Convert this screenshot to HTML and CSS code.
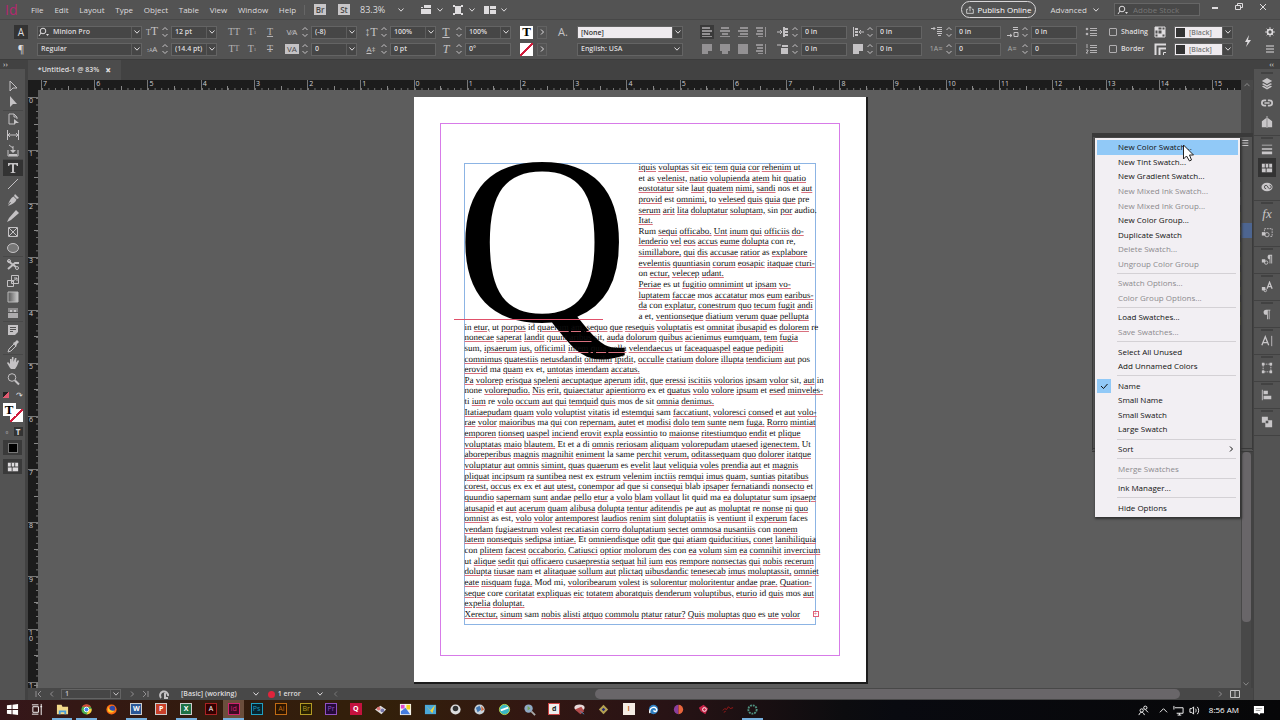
FILE: index.html
```html
<!DOCTYPE html>
<html lang="en">
<head>
    <meta charset="UTF-8">
    <meta name="viewport" content="width=device-width, initial-scale=1.0">
    <title>Untitled-1</title>
    <link rel="stylesheet" href="styles.css">
</head>
<body>
    <svg class="sprite" aria-hidden="true">
        <symbol id="down" viewBox="0 0 8 8"><path d="M1.5 2.5 4 5.2 6.5 2.5" class="ln"/></symbol>
        <symbol id="up" viewBox="0 0 8 8"><path d="M1.5 5.2 4 2.5 6.5 5.2" class="ln"/></symbol>
        <symbol id="right" viewBox="0 0 8 8"><path d="M3 1.5 5.5 4 3 6.5" class="ln"/></symbol>
        <symbol id="left" viewBox="0 0 8 8"><path d="M5 1.5 2.5 4 5 6.5" class="ln"/></symbol>
        <symbol id="spin" viewBox="0 0 8 12"><path d="M1.5 4 4 1.5 6.5 4M1.5 8 4 10.5 6.5 8" class="ln"/></symbol>
        <symbol id="search" viewBox="0 0 12 10"><circle cx="5" cy="4" r="2.8" class="ln"/><path d="M3 6 1 9" class="ln"/><path d="M8 7h3L9.500 9z"/></symbol>
        <symbol id="burger" viewBox="0 0 12 12"><path d="M2 3h8M2 6h8M2 9h8" class="ln"/></symbol>
        <symbol id="al" viewBox="0 0 12 12"><path d="M1 1h8v2H1zM1 4h10v2H1zM1 7h8v2H1zM1 10h10v1H1z"/></symbol>
        <symbol id="ac" viewBox="0 0 12 12"><path d="M2 1h8v2H2zM1 4h10v2H1zM3 7h6v2H3zM1 10h10v1H1z"/></symbol>
        <symbol id="ar" viewBox="0 0 12 12"><path d="M3 1h8v2H3zM1 4h10v2H1zM3 7h8v2H3zM1 10h10v1H1z"/></symbol>
        <symbol id="as" viewBox="0 0 12 12"><path d="M1 1h7v2H1zM2 4h6v2H2zM1 7h7v2H1zM3 10h5v1H3zM10 1h1v10h-1z"/></symbol>
        <symbol id="jl" viewBox="0 0 12 12"><path d="M1 1h10v7H1zM1 8h6v3H1z"/></symbol>
        <symbol id="jc" viewBox="0 0 12 12"><path d="M1 1h10v7H1zM3 8h6v3H3z"/></symbol>
        <symbol id="jf" viewBox="0 0 12 12"><path d="M1 1h10v10H1z"/></symbol>
        <symbol id="ind" viewBox="0 0 12 12"><path d="M0 6h5M3 4l2 2-2 2" class="ln"/><path d="M6 1h2v10H6zM8 2h3v2H8zM8 5h3v2H8zM8 8h3v2H8z"/></symbol>
        <symbol id="ind2" viewBox="0 0 12 12"><path d="M0 2h4" class="ln"/><path d="M5 2h6v2H5zM4 5h7v6H4z"/></symbol>
        <symbol id="indr" viewBox="0 0 12 12"><path d="M7 6h5M9 4 7 6l2 2" class="ln"/><path d="M1 1h1v10H1zM3 2h3v2H3zM3 5h3v2H3zM3 8h3v2H3z"/></symbol>
        <symbol id="space" viewBox="0 0 12 12"><path d="M0 2.500h4M2.500 1 4 2.500 2.500 4M6 1.500h5M6 3.500h5M6 5.500h5M6 7.500h5M7 9.500h3" class="ln"/></symbol>
        <symbol id="spaceb" viewBox="0 0 12 12"><path d="M0 9.500h5M3 8l2 1.500L3 11M6 1.500h5M6 3.500h5M7 6.500h4v4H7z" class="ln"/></symbol>
        <symbol id="bul" viewBox="0 0 12 12"><circle cx="2" cy="3" r="1.300"/><circle cx="2" cy="8" r="1.300"/><path d="M5 2.500h7M5 4.500h7M5 7.500h7M5 9.500h7" class="ln"/></symbol>
        <symbol id="num" viewBox="0 0 12 12"><path d="M2 1v4M1 7h2v1L1 10h2M5 2.500h7M5 4.500h7M5 7.500h7M5 9.500h7" class="ln"/></symbol>
        <symbol id="gridi" viewBox="0 0 12 12"><path d="M1 1h10v10H1zM1 4h10M1 8h10M4 1v10M8 1v10" class="ln"/><path d="M1 1h3v3H1zM8 4h3v4H8zM4 8h4v3H4z"/></symbol>
        <symbol id="corner" viewBox="0 0 12 12"><path d="M1.500 12V1.500H12M5.500 12V5.500H12" class="ln thick"/><path d="M9.500 12V9.500H12" class="ln"/></symbol>
        <symbol id="bolt" viewBox="0 0 12 12"><path d="M7 0 3 7h2.500L4 12l5-7H6z"/></symbol>
        <symbol id="gear" viewBox="0 0 12 12"><circle cx="6" cy="6" r="3" class="ln thick"/><path d="M6 0v3M6 9v3M0 6h3M9 6h3M2 2l2 2M8 8l2 2M10 2 8 4M4 8l-2 2" class="ln"/></symbol>
        <symbol id="view1" viewBox="0 0 12 12"><path d="M1 3h2v1H1zM4 1h7v3H4zM1 5h10v5H1z"/></symbol>
        <symbol id="view2" viewBox="0 0 12 12"><path d="M3 3h6v6H3zM1 1h2v2H1zM9 1h2v2H9zM1 9h2v2H1zM9 9h2v2H9zM3 2h6v1H3zM3 9h6v1H3z"/></symbol>
        <symbol id="view3" viewBox="0 0 12 12"><path d="M0 2h5v8H0zM6 2h6v3H6zM6 6h6v4H6z"/></symbol>
        <symbol id="share" viewBox="0 0 12 12"><path d="M3 5H1v6h10V5H9M6 8V1M3.500 3.500 6 1l2.500 2.500" class="ln"/></symbol>
        <symbol id="t-sel" viewBox="0 0 14 14"><path d="M4 2v10l3-3h4z" class="ln"/></symbol>
        <symbol id="t-dir" viewBox="0 0 14 14"><path d="M4 1v11l3-3h4z"/></symbol>
        <symbol id="t-page" viewBox="0 0 14 14"><path d="M8 12H3V2h5l3 3v2M8 2v3h3" class="ln"/><path d="M8 7v6l2-2h3z"/></symbol>
        <symbol id="t-gap" viewBox="0 0 14 14"><path d="M1.500 2v10M12.500 2v10M2 7h10M4 5 2 7l2 2M10 5l2 2-2 2" class="ln"/></symbol>
        <symbol id="t-col" viewBox="0 0 14 14"><path d="M2 6v6h10V6M3 1l4 3M7 2v5" class="ln"/><path d="M4 6h6L7 9zM3 10h8v2H3z"/></symbol>
        <symbol id="t-type" viewBox="0 0 14 14"><path d="M2 2h10v3h-1L10 3.500H8V11l1.500.5v.5h-5v-.5L6 11V3.500H4L3 5H2z"/></symbol>
        <symbol id="t-line" viewBox="0 0 14 14"><path d="M2 12 12 2" class="ln"/></symbol>
        <symbol id="t-pen" viewBox="0 0 14 14"><path d="M9 1l4 4-2 1-3-3zM7.500 3.500l3 3C10 9 7 11 2 13l3-4-1 0-2 3C3 8 5 4.500 7.500 3.500z"/></symbol>
        <symbol id="t-pencil" viewBox="0 0 14 14"><path d="M10 1l3 3-8 7-4 2 2-4z"/></symbol>
        <symbol id="t-frame" viewBox="0 0 14 14"><path d="M2.500 2.500h9v9h-9zM3 3l8 8M11 3l-8 8" class="ln"/></symbol>
        <symbol id="t-oval" viewBox="0 0 14 14"><ellipse cx="7" cy="7" rx="5.500" ry="4.500" class="ln dim"/></symbol>
        <symbol id="t-cut" viewBox="0 0 14 14"><path d="M2 3l8 6M2 11l7-6h4" class="ln thick"/><circle cx="11" cy="10" r="1.500" class="ln"/><circle cx="3" cy="3" r="1.500" class="ln"/></symbol>
        <symbol id="t-free" viewBox="0 0 14 14"><path d="M5.500 1.500h7v8h-7zM1.500 6.500h6v6h-6zM6 8l5-4M8 4h3v3" class="ln"/></symbol>
        <symbol id="t-grad" viewBox="0 0 14 14"><path d="M2 2h10v10H2z" fill="url(#g1)" stroke="#bbb"/></symbol>
        <symbol id="t-feath" viewBox="0 0 14 14"><path d="M2 2h10v4H2z" opacity=".5"/><path d="M2 7h10v5H2z" opacity=".8"/><path d="M4 4h2v2H4zM8 4h2v2H8z"/></symbol>
        <symbol id="t-note" viewBox="0 0 14 14"><path d="M2 2h10v7l-3 3H2z"/><path d="M4 4.500h6M4 6.500h6M4 8.500h3" stroke="#535353"/></symbol>
        <symbol id="t-eye" viewBox="0 0 14 14"><path d="M8 5 3 10l-1 3 3-1 5-5" class="ln"/><path d="M7 4l2-1 2-2 2 2-2 2-1 3z"/></symbol>
        <symbol id="t-hand" viewBox="0 0 14 14"><path d="M4 12 1 7l1-1 2 2V3h1.500v3L6 1h1.500v5L9 2h1.500L10 6.500 12 4l1 1-2 5-2 3H5z"/></symbol>
        <symbol id="t-zoom" viewBox="0 0 14 14"><circle cx="6" cy="5.500" r="3.800" class="ln"/><path d="M9 8.500l4 4" class="ln thick"/></symbol>
        <symbol id="d-layers" viewBox="0 0 14 14"><path d="M7 0l6 3.500-6 3.500-6-3.500zM1 7l2-1 4 2.500L11 6l2 1-6 3.500zM1 10l2-1 4 2.500L11 9l2 1-6 3.500z"/></symbol>
        <symbol id="d-link" viewBox="0 0 14 14"><path d="M6 4H4a3 3 0 0 0 0 6h2M8 4h2a3 3 0 0 1 0 6H8M4 7h6" class="ln thick"/></symbol>
        <symbol id="d-pages" viewBox="0 0 14 14"><path d="M6.500 2v11H1V6zM7.500 2v11H13V6z"/><path d="M7 0v14" class="ln"/></symbol>
        <symbol id="d-stroke" viewBox="0 0 14 14"><path d="M1 2h12v1H1zM1 6h12v2H1zM1 10h12v3H1z"/></symbol>
        <symbol id="d-swatch" viewBox="0 0 14 14"><path d="M1 2h12v10H1z"/><path d="M5 2v5M9 2v5M1 7h12M6 7v5" stroke="#333"/></symbol>
        <symbol id="d-cc" viewBox="0 0 14 14"><ellipse cx="7" cy="7" rx="6.500" ry="5"/><path d="M6 9a2 2 0 1 1 0-4c2 0 2 4 4 4a2 2 0 0 0 0-4" stroke="#444" fill="none"/></symbol>
        <symbol id="d-obj" viewBox="0 0 14 14"><path d="M4 5V2h9v9h-3" class="ln" stroke-dasharray="2 1"/><circle cx="7" cy="9" r="2.500" class="ln"/><path d="M1 6h4v4H1z"/></symbol>
        <symbol id="d-para" viewBox="0 0 14 14"><path d="M13 1H9a3 3 0 0 0 0 5h1v5h1V2h1v9h1zM1 6h4v4H1z"/><circle cx="6" cy="10" r="2" class="ln"/></symbol>
        <symbol id="d-char" viewBox="0 0 14 14"><path d="M7 9 10 1.500 13 9M8 6.500h4" class="ln wide"/><path d="M1 7h4v4H1z"/><circle cx="5" cy="11" r="1.500" class="ln"/></symbol>
        <symbol id="d-pil" viewBox="0 0 14 14"><path d="M11 2H6a3 3 0 0 0 0 6h1v5h1V3h1v10h1V3h1z"/></symbol>
        <symbol id="d-a" viewBox="0 0 14 14"><path d="M1 12 5 2l4 10M2.500 9h5" class="ln wide"/><path d="M12.500 1v12" class="ln"/></symbol>
        <symbol id="d-tf" viewBox="0 0 14 14"><path d="M2.500 2.500h9v9h-9z" class="ln" stroke-dasharray="2 1"/><path d="M1 1h3v3H1zM10 1h3v3h-3zM1 10h3v3H1zM10 10h3v3h-3z"/></symbol>
        <symbol id="d-align" viewBox="0 0 14 14"><path d="M1 1h1v12H1zM3 2h5v4H3zM3 8h9v4H3z"/></symbol>
        <symbol id="d-path" viewBox="0 0 14 14"><path d="M1 1h7v4h5v8H5V8H1z"/><path d="M5.500 5.500h3v3h-3z" fill="#535353"/></symbol>
        <defs><linearGradient id="g1"><stop stop-color="#555"/><stop offset="1" stop-color="#ccc"/></linearGradient></defs>
    </svg>

    <header class="menubar">
        <span class="logo">Id</span>
        <nav class="menus">
            <button>File</button><button>Edit</button><button>Layout</button><button>Type</button><button>Object</button><button>Table</button><button>View</button><button>Window</button><button>Help</button>
        </nav>
        <button class="chip">Br</button>
        <button class="chip">St</button>
        <button class="zoom">83.3% <svg><use href="#down"/></svg></button>
        <button class="viewbtn" aria-label="View options"><svg class="i12"><use href="#view1"/></svg><svg><use href="#down"/></svg></button>
        <button class="viewbtn" aria-label="Screen mode"><svg class="i12"><use href="#view2"/></svg><svg><use href="#down"/></svg></button>
        <button class="viewbtn" aria-label="Arrange documents"><svg class="i12"><use href="#view3"/></svg><svg><use href="#down"/></svg></button>
        <button class="publish"><svg><use href="#share"/></svg>Publish Online</button>
        <button class="advanced">Advanced <svg><use href="#down"/></svg></button>
        <label class="stock"><svg class="i12"><use href="#search"/></svg><input type="search" placeholder="Adobe Stock" aria-label="Adobe Stock"></label>
        <div class="winbtns">
            <button aria-label="Minimize"><svg class="i10" viewBox="0 0 10 10"><path d="M2 6h6" class="ln thick"/></svg></button>
            <button aria-label="Restore"><svg class="i10" viewBox="0 0 10 10"><path d="M3.500 3V1.500h5v4H7M1.500 3.500h5v4h-5z" class="ln"/></svg></button>
            <button aria-label="Close"><svg class="i10" viewBox="0 0 10 10"><path d="M2 2l6 6M8 2 2 8" class="ln"/></svg></button>
        </div>
    </header>

    <section class="control">
        <button class="mode on">A</button>
        <button class="mode">¶</button>

        <div class="box"><svg class="i12"><use href="#search"/></svg><input value="Minion Pro" aria-label="Font family"><button aria-label="Font list"><svg><use href="#down"/></svg></button></div>
        <div class="box"><input value="Regular" aria-label="Font style"><button aria-label="Style list"><svg><use href="#down"/></svg></button></div>

        <div class="field"><span class="glyph"><small>T</small>T</span><button aria-label="Step"><svg class="spin"><use href="#spin"/></svg></button><div class="box"><input value="12 pt" aria-label="Font size"><button aria-label="Sizes"><svg><use href="#down"/></svg></button></div></div>
        <div class="field"><span class="glyph sans"><small>↕A</small>A</span><button aria-label="Step"><svg class="spin"><use href="#spin"/></svg></button><div class="box"><input value="(14.4 pt)" aria-label="Leading"><button aria-label="Leadings"><svg><use href="#down"/></svg></button></div></div>

        <div class="caps"><button>TT</button><button>T<sup>1</sup></button><button class="ul">T</button></div>
        <div class="caps"><button>T<small>T</small></button><button>T<sub>1</sub></button><button class="st">T</button></div>

        <div class="field"><span class="glyph sans">V⁄A</span><button aria-label="Step"><svg class="spin"><use href="#spin"/></svg></button><div class="box"><input value="(-8)" aria-label="Kerning"><button aria-label="Kernings"><svg><use href="#down"/></svg></button></div></div>
        <div class="field"><span class="glyph sans inv">VA</span><button aria-label="Step"><svg class="spin"><use href="#spin"/></svg></button><div class="box"><input value="0" aria-label="Tracking"><button aria-label="Trackings"><svg><use href="#down"/></svg></button></div></div>

        <div class="field"><span class="glyph">↕T</span><button aria-label="Step"><svg class="spin"><use href="#spin"/></svg></button><div class="box"><input value="100%" aria-label="Vertical scale"><button aria-label="Scales"><svg><use href="#down"/></svg></button></div></div>
        <div class="field"><span class="glyph sans"><u>A</u>‡</span><button aria-label="Step"><svg class="spin"><use href="#spin"/></svg></button><div class="box"><input value="0 pt" aria-label="Baseline shift"></div></div>

        <div class="field"><span class="glyph"><u>T</u></span><button aria-label="Step"><svg class="spin"><use href="#spin"/></svg></button><div class="box"><input value="100%" aria-label="Horizontal scale"><button aria-label="Scales"><svg><use href="#down"/></svg></button></div></div>
        <div class="field"><span class="glyph"><i>T</i></span><button aria-label="Step"><svg class="spin"><use href="#spin"/></svg></button><div class="box"><input value="0°" aria-label="Skew"></div></div>

        <div class="paint"><button class="fill">T</button><button class="more" aria-label="Fill"><svg><use href="#right"/></svg></button></div>
        <div class="paint"><button class="none" aria-label="No stroke"></button><button class="more" aria-label="Stroke"><svg><use href="#right"/></svg></button></div>

        <span class="charstyle">A.</span>
        <span></span>

        <div class="box light"><input value="[None]" aria-label="Character style"><button aria-label="Styles"><svg><use href="#down"/></svg></button></div>
        <div class="box"><input value="English: USA" aria-label="Language"><button class="plain" aria-label="Languages"><svg><use href="#down"/></svg></button></div>

        <div class="aligns"><button class="on" aria-label="Left"><svg class="i12"><use href="#al"/></svg></button><button aria-label="Center"><svg class="i12"><use href="#ac"/></svg></button><button aria-label="Right"><svg class="i12"><use href="#ar"/></svg></button><button aria-label="Towards spine"><svg class="i12"><use href="#as"/></svg></button></div>
        <div class="aligns"><button aria-label="Justify left"><svg class="i12"><use href="#jl"/></svg></button><button aria-label="Justify center"><svg class="i12"><use href="#jc"/></svg></button><button aria-label="Justify all"><svg class="i12"><use href="#jf"/></svg></button><button aria-label="Away from spine"><svg class="i12"><use href="#as"/></svg></button></div>

        <div class="field"><svg class="i12"><use href="#ind"/></svg><button aria-label="Step"><svg class="spin"><use href="#spin"/></svg></button><div class="box"><input value="0 in" aria-label="Left indent"></div></div>
        <div class="field"><svg class="i12"><use href="#ind2"/></svg><button aria-label="Step"><svg class="spin"><use href="#spin"/></svg></button><div class="box"><input value="0 in" aria-label="First line indent"></div></div>
        <div class="field"><svg class="i12"><use href="#indr"/></svg><button aria-label="Step"><svg class="spin"><use href="#spin"/></svg></button><div class="box"><input value="0 in" aria-label="Right indent"></div></div>
        <div class="field"><svg class="i12"><use href="#jl"/></svg><button aria-label="Step"><svg class="spin"><use href="#spin"/></svg></button><div class="box"><input value="0 in" aria-label="Last line indent"></div></div>
        <div class="field"><svg class="i12"><use href="#space"/></svg><button aria-label="Step"><svg class="spin"><use href="#spin"/></svg></button><div class="box"><input value="0 in" aria-label="Space before"></div></div>
        <div class="field"><span class="glyph sans dimmed">1A≡</span><button aria-label="Step"><svg class="spin"><use href="#spin"/></svg></button><div class="box"><input value="0" aria-label="Drop cap lines"></div></div>
        <div class="field"><svg class="i12"><use href="#spaceb"/></svg><button aria-label="Step"><svg class="spin"><use href="#spin"/></svg></button><div class="box"><input value="0 in" aria-label="Space after"></div></div>
        <div class="field"><span class="glyph sans dimmed">A≡</span><button aria-label="Step"><svg class="spin"><use href="#spin"/></svg></button><div class="box"><input value="0" aria-label="Drop cap characters"></div></div>

        <button class="lists" aria-label="Bulleted list"><svg class="i12"><use href="#bul"/></svg></button>
        <button class="lists" aria-label="Numbered list"><svg class="i12"><use href="#num"/></svg></button>

        <label class="check"><input type="checkbox">Shading</label>
        <label class="check"><input type="checkbox">Border</label>

        <svg class="i12"><use href="#gridi"/></svg>
        <svg class="i12"><use href="#corner"/></svg>

        <div class="box light black"><i></i><input value="[Black]" aria-label="Shading color"><button aria-label="Colors"><svg><use href="#down"/></svg></button></div>
        <div class="box light black"><i></i><input value="[Black]" aria-label="Border color"><button aria-label="Colors"><svg><use href="#down"/></svg></button></div>

        <button class="bolt" aria-label="Quick apply"><svg class="i12"><use href="#bolt"/></svg></button>
        <button class="end" aria-label="Settings"><svg class="i10"><use href="#gear"/></svg></button>
        <button class="end" aria-label="Panel menu"><svg class="i12"><use href="#burger"/></svg></button>
    </section>

    <main class="work">
        <aside class="tools">
            <div class="strip">››</div>
            <div class="toolbox" id="toolbox"></div>
            <div class="swaprow"><span class="defaults"></span><span>↷</span></div>
            <div class="fillstroke"><button class="fill big">T</button><button class="none big" aria-label="Stroke"></button></div>
            <div class="applyto"><button aria-label="Container">▫</button><button class="on">T</button></div>
            <button class="apply" aria-label="Apply color"><i></i></button>
            <button class="apply" aria-label="Screen mode"><svg class="i12"><use href="#d-swatch"/></svg></button>
        </aside>

        <section class="doc">
            <div class="tabs"><button class="tab">*Untitled-1 @ 83% <b>×</b></button></div>
            <div class="ruler-row"><div class="hruler" id="hruler"></div><svg class="uparrow"><use href="#up"/></svg></div>
            <div class="stage">
                <div class="vruler" id="vruler"></div>
                <div class="canvas">
                    <div class="page">
                        <div class="margins">
                            <div class="frame">
                                <span class="dropcap">Q</span>
                                <div class="story" id="story"></div>
                                <span class="spell"></span>
                                <span class="overset">+</span>
                            </div>
                        </div>
                    </div>
                </div>
                <div class="vscroll"><i></i><svg><use href="#down"/></svg></div>

                <div class="panel">
                    <div class="panelhead"><svg class="i10"><use href="#burger"/></svg></div>
                    <div class="swatches"><i class="w"></i><i class="w"></i><i></i><i class="sel"></i><i></i><i></i><i></i><i></i><i></i><i></i></div>
                </div>
                <ul class="flyout" role="menu">
                    <li><button class="hot">New Color Swatch...</button></li>
                    <li><button>New Tint Swatch...</button></li>
                    <li><button>New Gradient Swatch...</button></li>
                    <li><button disabled>New Mixed Ink Swatch...</button></li>
                    <li><button disabled>New Mixed Ink Group...</button></li>
                    <li><button>New Color Group...</button></li>
                    <li><button>Duplicate Swatch</button></li>
                    <li><button disabled>Delete Swatch...</button></li>
                    <li><button disabled>Ungroup Color Group</button></li>
                    <li class="sep"></li>
                    <li><button disabled>Swatch Options...</button></li>
                    <li><button disabled>Color Group Options...</button></li>
                    <li class="sep"></li>
                    <li><button>Load Swatches...</button></li>
                    <li><button disabled>Save Swatches...</button></li>
                    <li class="sep"></li>
                    <li><button>Select All Unused</button></li>
                    <li><button>Add Unnamed Colors</button></li>
                    <li class="sep"></li>
                    <li><button class="checked"><svg viewBox="0 0 14 14"><path d="M4 7l2.500 2.500L10.500 5" class="ln"/></svg>Name</button></li>
                    <li><button>Small Name</button></li>
                    <li><button>Small Swatch</button></li>
                    <li><button>Large Swatch</button></li>
                    <li class="sep"></li>
                    <li><button class="sub">Sort <svg><use href="#right"/></svg></button></li>
                    <li class="sep"></li>
                    <li><button disabled>Merge Swatches</button></li>
                    <li class="sep"></li>
                    <li><button>Ink Manager...</button></li>
                    <li class="sep"></li>
                    <li><button>Hide Options</button></li>
                </ul>
                <svg class="cursor" viewBox="0 0 12 18"><path d="M1 1v14l3-3 3 5 2-1-2-5h4z" fill="#fff" stroke="#222"/></svg>
            </div>
            <footer class="status">
                <button aria-label="First page"><svg viewBox="0 0 8 8"><path d="M1 1v6M6 1 3 4l3 3" class="ln"/></svg></button>
                <button aria-label="Previous page"><svg><use href="#left"/></svg></button>
                <div class="box pageno"><input value="1" aria-label="Page"><button aria-label="Pages"><svg><use href="#down"/></svg></button></div>
                <button aria-label="Next page"><svg><use href="#right"/></svg></button>
                <button aria-label="Last page"><svg viewBox="0 0 8 8"><path d="M7 1v6M2 1l3 3-3 3" class="ln"/></svg></button>
                <svg class="pre i12" viewBox="0 0 12 12"><path d="M3 10a4 4 0 1 1 7-2M7 5v5h3" class="ln thick"/></svg>
                <button class="profile">[Basic] (working) <svg><use href="#down"/></svg></button>
                <button class="errors"><i></i>1 error <svg><use href="#down"/></svg></button>
                <button aria-label="Scroll left" class="faint"><svg><use href="#left"/></svg></button>
                <div class="hscroll"><i></i></div>
                <button aria-label="Scroll right"><svg><use href="#right"/></svg></button>
                <svg class="i12 split" viewBox="0 0 12 12"><path d="M1.500 2.500h9v7h-9zM6 2v8" class="ln"/></svg>
            </footer>
        </section>

        <aside class="dock">
            <div class="strip">‹‹</div>
            <div class="dockgroups" id="dock"></div>
        </aside>
    </main>

    <footer class="taskbar">
        <div class="apps">
            <button aria-label="Start"><svg viewBox="0 0 14 14"><path d="M1 2.500 6 2v4.500H1zM7 1.800 13 1v5.500H7zM1 7.500h5V12l-5-.5zM7 7.500h6V13l-6-.8z"/></svg></button>
            <button aria-label="Task view"><svg viewBox="0 0 14 14"><path d="M1 2h7M1 12h7M2 4h6v6H2zM11 1v12M10 4h2" class="ln"/></svg></button>
            <button class="open" aria-label="Explorer"><svg viewBox="0 0 14 14"><path d="M1 2h5l1 2h6v8H1z" fill="#f3d98b"/><path d="M3 8h8v4H9v-2H5v2H3z" fill="#4a9edb"/></svg></button>
            <button class="open" aria-label="Chrome"><svg viewBox="0 0 14 14"><circle cx="7" cy="7" r="5.500" fill="#4caf50"/><path d="M2 4a6 6 0 0 1 10 0z" fill="#db4437"/><path d="M12.500 6a5.500 5.500 0 0 1-5.500 6.500L9.500 7z" fill="#ffcd40"/><circle cx="7" cy="7" r="2.500" fill="#4285f4" stroke="#fff"/></svg></button>
            <button aria-label="Firefox"><svg viewBox="0 0 14 14"><circle cx="7" cy="7" r="5.500" fill="#ff6a13"/><circle cx="8" cy="6" r="3" fill="#314aa8"/><path d="M3 3c1 4 3 6 7 5-1 3-6 3-7 0z" fill="#ffc928"/></svg></button>
            <button class="open"><span class="app word">W</span></button>
            <button><span class="app ppt">P</span></button>
            <button class="open"><span class="app xls">X</span></button>
            <button><span class="app acro">A</span></button>
            <button class="open active"><span class="app indd">Id</span></button>
            <button><span class="app ps">Ps</span></button>
            <button><span class="app ai">Ai</span></button>
            <button><span class="app br">Br</span></button>
            <button><span class="app pr">Pr</span></button>
            <button><span class="app q">Q</span></button>
            <button aria-label="Photos"><svg viewBox="0 0 14 14"><path d="M1 7l6-4 6 4-5 5z" fill="#ddd"/><circle cx="5" cy="6" r="2" fill="#d77"/><circle cx="9" cy="8" r="2" fill="#77a"/></svg></button>
            <button aria-label="Paint"><svg viewBox="0 0 14 14"><path d="M1 1h12v12H1z" fill="#f4f4ee"/><path d="M2 2h4v4H2z" fill="#e04bd0"/><path d="M8 2h4v5H8z" fill="#f4d51e"/><path d="M2 9l5-4 5 7H2z" fill="#447ce0"/></svg></button>
            <button aria-label="Draw"><svg viewBox="0 0 14 14"><path d="M1 2h12v10H1z" fill="#4aa8d8"/><path d="M2 3l5 5 5-6-3 9z" fill="#f3d23a"/></svg></button>
            <button aria-label="Camera"><svg viewBox="0 0 14 14"><circle cx="7" cy="7" r="5.500" fill="#ddd"/><circle cx="7" cy="6" r="3" fill="#333"/></svg></button>
            <button aria-label="Globe"><svg viewBox="0 0 14 14"><circle cx="7" cy="7" r="5.500" fill="#c9d3da"/><path d="M3 5l4-2 2 4-4 3z" fill="#4477b0"/><path d="M9 3l3 4-3 2z" fill="#d0683a"/></svg></button>
            <button aria-label="Sync"><svg viewBox="0 0 14 14"><circle cx="7" cy="7" r="5.500" fill="#39b6c5" stroke="#b5d24a"/><path d="M3 8l8-3" stroke="#fff" stroke-width="2"/></svg></button>
            <button aria-label="Find"><svg viewBox="0 0 14 14"><circle cx="6" cy="6" r="4.500" fill="#8fa9c4"/><path d="M5 3l3 3-3 2z" fill="#76a65a"/><path d="M9 9l4 4" stroke="#aaa" stroke-width="2"/></svg></button>
            <button><span class="app dd">d</span></button>
            <button aria-label="Snip"><svg viewBox="0 0 14 14"><ellipse cx="7" cy="5" rx="5.500" ry="3.500" fill="#e8dada"/><path d="M2 7l7-3 3 5-4 3z" fill="#b54b4b"/><path d="M8 9l4 3" stroke="#4c88b8"/></svg></button>
            <button aria-label="Target"><svg viewBox="0 0 14 14"><path d="M7 2l5 5-5 5-5-5z" fill="#b4a052"/><path d="M7 5l2 2-2 2-2-2z" fill="#222a80"/></svg></button>
            <button><span class="app ii">I</span></button>
            <button aria-label="Search app"><svg viewBox="0 0 14 14"><circle cx="7" cy="7" r="5" fill="#2f7fc2"/><path d="M3 11c-1-6 5-8 7-5s-2 4-3 2" stroke="#fff" fill="none" stroke-width="1.500"/></svg></button>
            <button aria-label="Dual"><svg viewBox="0 0 14 14"><path d="M7 2v10a5 5 0 0 1 0-10z" fill="#8a3d9c"/><path d="M7 2v10a5 5 0 0 0 0-10z" fill="#e8643c"/></svg></button>
            <button aria-label="Red"><svg viewBox="0 0 14 14"><path d="M2 5l5-3 5 4-3 6-5-3z" fill="#c72348"/><circle cx="8" cy="7" r="2" fill="none" stroke="#fff"/></svg></button>
            <button aria-label="Mark"><svg viewBox="0 0 14 14"><path d="M2 8l2-2 2 1 2-3 2 2 3-1M3 10l2-1" stroke="#a01818" fill="none"/></svg></button>
            <button class="open" aria-label="Recorder"><svg viewBox="0 0 14 14"><circle cx="7" cy="7" r="4.500" fill="none" stroke="#4f9180" stroke-width="2" stroke-dasharray="2 1"/></svg></button>
        </div>
        <div class="tray">
            <svg viewBox="0 0 12 12"><circle cx="4" cy="6" r="1.800" class="ln"/><path d="M1 11c1-4 5-4 6 0" class="ln"/><circle cx="8" cy="3" r="1.800" class="ln"/><path d="M8 5l3 3" class="ln"/></svg>
            <svg class="caret" viewBox="0 0 10 10"><path d="M1 7l4-4 4 4" class="ln"/></svg>
            <svg viewBox="0 0 12 12"><path d="M1 1v4M2 3h9v6H4M5 11h4M7 9v2" class="ln"/></svg>
            <svg viewBox="0 0 12 12"><path d="M1 4h2l2-2v8L3 8H1zM7 4c1 1 1 3 0 4M9 2c2 2 2 6 0 8" class="ln"/></svg>
            <time>8:56 AM</time>
            <svg class="note" viewBox="0 0 12 12"><path d="M1 1h11v8H8l-1 2-2-2H1z"/><path d="M3 4h7M3 6h5" stroke="#999"/></svg>
        </div>
    </footer>
    <script src="script.js"></script>
</body>
</html>
```
FILE: styles.css
```css
* {
    box-sizing: border-box;
}
body {
    margin: 0;
    height: 100vh;
    display: flex;
    flex-direction: column;
    overflow: hidden;
    background: #535353;
    color: #dedcde;
    font-family: "Open Sans", "Noto Sans", sans-serif;
    font-size: 8px;
    line-height: 10px;
}
button, input {
    font: inherit;
    color: inherit;
    background: none;
    border: 0;
    padding: 0;
    margin: 0;
    min-width: 0;
}
button {
    display: flex;
    align-items: center;
    justify-content: center;
    white-space: nowrap;
}
svg {
    width: 8px;
    height: 8px;
    flex: none;
    fill: currentColor;
    overflow: visible;
}
.sprite {
    position: absolute;
    width: 0;
    height: 0;
}
.ln {
    fill: none;
    stroke: currentColor;
    stroke-width: 1px;
}
.thick {
    stroke-width: 2px;
}
.wide {
    stroke-width: 1.5px;
}
.dim {
    fill: #777;
}
.i10 {
    width: 10px;
    height: 10px;
}
.i12 {
    width: 12px;
    height: 12px;
}

/* menu bar */
.menubar {
    height: 20px;
    flex: none;
    display: flex;
    align-items: center;
    padding-left: 5px;
    border-bottom: 1px solid #474747;
}
.logo {
    width: 26px;
    font-size: 14px;
    color: #b3286f;
}
.menus {
    display: flex;
    gap: 11px;
    padding-right: 8px;
    border-right: 1px solid #666;
    width: 274px;
}
.chip {
    width: 12px;
    height: 11px;
    margin-left: 9px;
    background: #c8c6c8;
    color: #484848;
    font-weight: 600;
}
.chip + .chip {
    margin-left: 12px;
}
.zoom {
    margin-left: 10px;
    margin-right: 15px;
    gap: 12px;
    font-size: 9px;
}
.viewbtn {
    gap: 4px;
    margin-right: 8px;
}
.publish {
    margin-left: auto;
    width: 75px;
    height: 17px;
    border: 1px solid #d8d6d8;
    border-radius: 9px;
    gap: 3px;
    color: #fff;
}
.advanced {
    margin-left: 14px;
    gap: 5px;
}
.stock {
    display: flex;
    align-items: center;
    width: 86px;
    height: 13px;
    margin-left: 14px;
    border: 1px solid #666;
    background: #484848;
    gap: 4px;
    padding-left: 2px;
}
.stock input {
    width: 60px;
    outline: none;
}
.stock input::placeholder {
    color: #777;
    opacity: 1;
}
.winbtns {
    display: flex;
    gap: 14px;
    margin: 0 12px 6px 10px;
}

/* control panel, two rows filled column by column */
.control {
    height: 40px;
    flex: none;
    display: grid;
    grid-auto-flow: column;
    grid-template-rows: 13px 13px;
    grid-template-columns: 23px 105px 75px 65px 75px 79px 75px 43px 23px 106px 90px 74px 75px 79px 76px 28px 49px 20px 59px 1fr 16px;
    row-gap: 4px;
    align-content: center;
    align-items: center;
    padding: 2px 2px 0 14px;
    border-bottom: 1px solid #3c3c3c;
    font-size: 7px;
}
.mode {
    width: 14px;
    height: 14px;
    font-size: 10px;
}
.mode.on {
    background: #333;
}
.box {
    display: flex;
    align-items: center;
    height: 13px;
    background: #464646;
    border: 1px solid #646464;
}
.box input {
    flex: 1;
    width: 10px;
    padding-left: 3px;
    font-weight: 600;
}
.box button {
    width: 10px;
    height: 11px;
    border-left: 1px solid #5c5c5c;
}
.box .plain {
    border-left: 0;
}
.field {
    display: flex;
    justify-content: flex-end;
    align-items: center;
    gap: 2px;
    color: #c4c2c4;
}
.field .box {
    width: 46px;
    color: #dedcde;
}
.spin {
    height: 12px;
}
.glyph {
    width: 14px;
    text-align: center;
    font-family: "Liberation Serif", serif;
    font-size: 12px;
    white-space: nowrap;
}
.glyph small {
    font-size: 8px;
}
.sans {
    font-family: "Open Sans", sans-serif;
    font-size: 8px;
}
.sans small {
    font-size: 5px;
}
.inv {
    background: #c4c2c4;
    color: #484848;
}
.dimmed {
    color: #aaa;
    font-size: 7px;
}
.caps {
    display: grid;
    grid-template-columns: 18px 18px 18px;
    padding-left: 8px;
    color: #b4b2b4;
    font-family: "Liberation Serif", serif;
    font-size: 10px;
    line-height: 10px;
}
.caps sup, .caps sub {
    font-size: 5px;
    line-height: 5px;
}
.caps small {
    font-size: 8px;
}
.ul {
    text-decoration: underline;
}
.st {
    text-decoration: line-through;
}
.paint {
    display: flex;
    gap: 4px;
    padding-left: 9px;
}
.fill, .none {
    width: 13px;
    height: 13px;
    background: #fff;
    color: #000;
    font-family: "Liberation Serif", serif;
    font-weight: bold;
    font-size: 13px;
}
.none {
    background: linear-gradient(to bottom right, #fff 44%, #d01c3c 44%, #d01c3c 56%, #fff 56%);
}
.more {
    width: 10px;
    border: 1px solid #626262;
}
.charstyle {
    padding-left: 4px;
    font-size: 11px;
    color: #c4c2c4;
}
.light {
    background: #464646;
}
.light input {
    background: #efebef;
    color: #333;
    height: 11px;
}
.aligns {
    display: grid;
    grid-template-columns: repeat(4, 18px);
    padding-left: 15px;
    color: #939193;
}
.aligns button {
    height: 14px;
}
.aligns .on {
    background: #3a3a3a;
    justify-self: center;
    width: 14px;
}
.lists {
    color: #b4b2b4;
}
.check {
    display: flex;
    align-items: center;
    gap: 4px;
    padding-left: 4px;
    font-weight: 600;
}
.check input {
    appearance: none;
    width: 8px;
    height: 8px;
    border: 1px solid #b0aeb0;
    border-radius: 1px;
}
.black i {
    width: 11px;
    height: 11px;
    background: #333;
    border: 1px solid #efebef;
}
.black input {
    color: #777;
}
.bolt {
    grid-row: span 2;
}

/* work area */
.work {
    flex: 1;
    display: flex;
    min-height: 0;
}
.tools {
    width: 28px;
    display: flex;
    flex-direction: column;
    align-items: center;
    border-right: 3px solid #424242;
}
.strip {
    align-self: stretch;
    height: 9px;
    flex: none;
    padding-left: 3px;
    background: #424242;
    line-height: 7px;
}
.toolbox {
    margin-top: 9px;
    width: 20px;
}
.tool {
    width: 20px;
    height: 16px;
    color: #c4c2c4;
}
.tool svg {
    width: 14px;
    height: 14px;
}
.tool.on {
    background: #333;
}
.toolgroup + .toolgroup {
    border-top: 1px solid #484848;
}
.swaprow {
    display: flex;
    gap: 7px;
    margin-top: 3px;
    align-items: center;
}
.defaults {
    width: 6px;
    height: 6px;
    background: linear-gradient(to bottom right, #222 50%, #e05a70 50%);
}
.fillstroke {
    display: flex;
    align-items: flex-start;
    height: 20px;
    margin-top: 3px;
}
.fillstroke .none {
    margin: 6px 0 0 -6px;
}
.fillstroke .fill {
    z-index: 1;
}
.applyto {
    display: flex;
    gap: 2px;
    margin-top: 4px;
}
.applyto button {
    width: 9px;
    height: 9px;
}
.applyto .on {
    background: #333;
    font-weight: bold;
}
.apply {
    width: 19px;
    height: 15px;
    margin-top: 4px;
    background: #3a3a3a;
}
.apply i {
    width: 10px;
    height: 10px;
    background: #000;
    border: 1px solid #777;
}
.doc {
    flex: 1;
    min-width: 0;
    display: flex;
    flex-direction: column;
}
.tabs {
    height: 20px;
    flex: none;
    display: flex;
    background: #424242;
}
.tab {
    width: 93px;
    gap: 6px;
    background: #4c4c4c;
    font-size: 7px;
    font-weight: 600;
}
.tab b {
    font-size: 10px;
}
.ruler-row {
    display: flex;
    height: 10px;
    flex: none;
    background: #484848;
}
.hruler {
    flex: 1;
    display: grid;
    grid-template-columns: repeat(22, 1fr) 29px;
    padding-left: 13px;
    background: #1c1c1c;
    overflow: hidden;
}
.hruler span, .vruler span {
    font-size: 7px;
    line-height: 8px;
    color: #d0ced0;
}
.hruler span {
    border-left: 1px solid #777;
    padding-left: 1px;
    background:
        linear-gradient(#888, #888) 50% 100% / 1px 4px no-repeat,
        linear-gradient(90deg, #777 1px, transparent 1px) 0 100% / 12.5% 2px repeat-x;
}
.hruler span:last-child {
    background: linear-gradient(90deg, #777 1px, transparent 1px) 0 100% / 7px 2px repeat-x;
}
.uparrow {
    margin: 1px 2px;
    color: #888;
}
.stage {
    flex: 1;
    min-height: 0;
    display: flex;
    position: relative;
}
.vruler {
    width: 10px;
    display: grid;
    grid-template-rows: repeat(11, 1fr) 6px;
    padding-top: 7px;
    background: #1c1c1c;
    overflow: hidden;
}
.vruler span {
    border-top: 1px solid #777;
    padding-left: 1px;
    line-height: 6px;
    width: 10px;
    word-break: break-all;
    padding-right: 4px;
    min-height: 0;
    background:
        linear-gradient(#888, #888) 100% 50% / 4px 1px no-repeat,
        linear-gradient(#777 1px, transparent 1px) 100% 0 / 2px 12.5% repeat-y;
}
.canvas {
    flex: 1;
    display: flex;
    justify-content: center;
    background: #5d5d5d;
    padding: 7px 0 6px;
}
.page {
    width: 452px;
    padding: 26px;
    display: flex;
    background: #fff;
    box-shadow: 1px 1px 0 1px #1c1c1c;
}
.margins {
    flex: 1;
    min-width: 0;
    display: flex;
    border: 1px solid #d77be8;
    padding: 39px 23px 30px;
}
.frame {
    flex: 1;
    min-width: 0;
    display: flex;
    position: relative;
    border: 1px solid #8cb4e4;
}
.story {
    flex: 1;
    min-width: 0;
    display: flex;
    flex-direction: column;
    justify-content: space-between;
    position: relative;
    padding-bottom: 5px;
    margin-top: -2px;
    color: #111;
    font-family: "Liberation Serif", serif;
    font-size: 9px;
    line-height: 10px;
    text-rendering: geometricPrecision;
}
.story p {
    margin: 0;
    white-space: nowrap;
}
.story .side {
    margin-left: 174px;
}
.story span {
    text-decoration: underline 1px #d8707e;
    text-underline-offset: 1px;
}
.dropcap {
    position: absolute;
    left: -9px;
    top: -56px;
    color: #000;
    font-family: "Liberation Serif", serif;
    font-size: 240px;
    line-height: 264px;
}
.spell {
    position: absolute;
    left: -11px;
    top: 155px;
    width: 149px;
    height: 1px;
    background: #e0506a;
}
.overset {
    position: absolute;
    right: -4px;
    bottom: 7px;
    width: 6px;
    height: 6px;
    border: 1px solid #e06078;
    background: #fff;
    color: #e06078;
    font-size: 6px;
    line-height: 4px;
    text-align: center;
}
.vscroll {
    width: 12px;
    display: flex;
    flex-direction: column;
    align-items: center;
    justify-content: flex-end;
    background: #484848;
    border-right: 2px solid #424242;
    color: #888;
}
.vscroll i {
    width: 9px;
    height: 170px;
    margin-bottom: 58px;
    border-radius: 4px;
    background: #696669;
}
.panel {
    position: absolute;
    top: 43px;
    right: 0;
    width: 161px;
    height: 319px;
    background: #535353;
    border: 1px solid #3a3a3a;
    border-bottom: 4px double #3a3a3a;
}
.panelhead {
    height: 14px;
    display: flex;
    justify-content: flex-end;
    align-items: flex-end;
    padding-right: 2px;
    border-top: 3px solid #3a3a3a;
}
.swatches {
    padding-top: 30px;
}
.swatches i {
    display: block;
    height: 15px;
    border-right: 11px solid #535353;
    background: linear-gradient(#d8e23c, #d8e23c) 100% 50% / 2px 8px no-repeat;
}
.swatches .w {
    background-image: linear-gradient(#ddd, #ddd);
}
.swatches .sel {
    border-right-color: #4d6590;
}
.flyout {
    position: absolute;
    top: 48px;
    right: 13px;
    width: 145px;
    height: 379px;
    display: flex;
    flex-direction: column;
    margin: 0;
    padding: 2px;
    list-style: none;
    background: #f2eff3;
    color: #111;
    box-shadow: 1px 1px 2px 1px #333;
}
.flyout li {
    flex: 1;
    display: flex;
}
.flyout .sep {
    flex: none;
    height: 5px;
    margin: 0 2px 0 20px;
    background: linear-gradient(#d4d1d5, #d4d1d5) 0 2px / 100% 1px no-repeat;
}
.flyout button {
    flex: 1;
    justify-content: flex-start;
    padding-left: 21px;
}
.flyout button:disabled {
    color: #8c8a8e;
}
.flyout .hot {
    background: #91c9f7;
}
.flyout .checked {
    padding-left: 0;
    gap: 7px;
}
.checked svg {
    width: 14px;
    height: 14px;
    background: #91c9f7;
}
.flyout .sub {
    justify-content: space-between;
    padding-right: 3px;
}
.cursor {
    position: absolute;
    top: 54px;
    right: 58px;
    width: 13px;
    height: 18px;
}

/* status bar */
.status {
    height: 12px;
    flex: none;
    display: flex;
    align-items: center;
    padding-left: 7px;
    background: #484848;
    color: #c4c2c4;
    font-size: 7px;
    font-weight: 600;
}
.status > button {
    margin-right: 5px;
    color: #929092;
}
.pageno {
    width: 60px;
    height: 10px;
    margin-right: 7px;
}
.status .pageno button {
    height: 8px;
}
.pre {
    margin: 0 11px 0 4px;
}
.status .profile, .status .errors {
    color: #dedcde;
    gap: 15px;
    margin-right: 8px;
}
.errors i {
    width: 7px;
    height: 7px;
    margin-right: -12px;
    border-radius: 50%;
    background: #e0243c;
}
.status .faint {
    color: #777;
}
.hscroll {
    flex: 1;
    padding: 0 36px 0 250px;
}
.hscroll i {
    display: block;
    height: 10px;
    border-radius: 5px;
    background: #696669;
}
.split {
    margin-right: 12px;
}

/* panel dock */
.dock {
    width: 27px;
    border-left: 1px solid #424242;
}
.dock .strip {
    text-align: right;
    padding-right: 6px;
}
.dockgroups {
    padding-top: 2px;
}
.dockgroup {
    padding-bottom: 4px;
    border-bottom: 1px solid #424242;
}
.dockgroup::before {
    content: "";
    display: block;
    width: 12px;
    height: 2px;
    margin: 1px auto 0;
    background: #424242;
}
.dockgroup button {
    width: 18px;
    height: 19px;
    margin: 0 auto;
    color: #c8c6c8;
}
.dockgroup svg {
    width: 12px;
    height: 12px;
}
.dockgroup .on {
    background: #333;
}
.dockgroup .fx {
    font-family: "Liberation Serif", serif;
    font-size: 13px;
    font-style: italic;
}

/* taskbar */
.taskbar {
    height: 20px;
    flex: none;
    display: flex;
    justify-content: space-between;
    background: linear-gradient(90deg, #35161a 0, #331a10 12%, #33200a 30%, #321612 42%, #281315 52%, #0c0c0f 66%, #090a10 70%, #070708 100%);
    color: #fff;
}
.apps {
    display: flex;
    width: 765px;
}
.apps button {
    flex: 1;
    margin: 0 2px;
    border-bottom: 2px solid transparent;
}
.apps .open {
    border-bottom-color: #76b0de;
}
.apps .active {
    margin: 0;
    background: #6b4e3c;
}
.apps svg {
    width: 13px;
    height: 13px;
}
.app {
    width: 12px;
    height: 12px;
    border: 1px solid;
    font-size: 7px;
    line-height: 10px;
    text-align: center;
}
.word { background: #2b5797; font-weight: bold; }
.ppt { background: #c8402a; font-weight: bold; }
.xls { background: #1e7145; font-weight: bold; }
.word, .ppt, .xls { border-color: #ccc; }
.acro { background: #300; border-color: #a22; }
.indd { background: #3c0a24; color: #d0226e; }
.ps { background: #06242e; color: #1f9fc0; }
.ai { background: #2c1500; color: #c06a14; }
.br { background: #2a2200; color: #b39a24; }
.pr { background: #25093a; color: #9050c0; }
.q { background: #c4123e; border-color: #c4123e; font-weight: bold; }
.dd { background: #eee; color: #222; border-color: #c44; font-weight: bold; }
.ii { background: #f4ece4; color: #c46a2c; border-color: #f4ece4; font-weight: bold; }
.tray {
    display: flex;
    align-items: center;
    gap: 5px;
    padding-right: 16px;
}
.tray svg {
    width: 11px;
    height: 11px;
}
.tray .caret {
    width: 9px;
    margin-left: 5px;
}
.tray time {
    margin-left: 4px;
}
.tray .note {
    margin-left: 9px;
}
```
FILE: script.js
```js
const lines = [
    "iquis voluptas sit eic tem quia cor rehenim ut",
    "et as velenist, natio volupienda atem hit quatio",
    "eostotatur site laut quatem nimi, sandi nos et aut",
    "provid est omnimi, to velesed quis quia que pre",
    "serum arit lita doluptatur soluptam, sin por audio.",
    "Itat.",
    "Rum sequi officabo. Unt inum qui officiis do-",
    "lenderio vel eos accus eume dolupta con re,",
    "simillabore, qui dis accusae ratior as explabore",
    "evelentis quuntiasin corum eosapic itaquae cturi-",
    "on ectur, velecep udant.",
    "Periae es ut fugitio omnimint ut ipsam vo-",
    "luptatem faccae mos accatatur mos eum earibus-",
    "da con explatur, conestrum quo tecum fugit andi",
    "a et, ventionseque diatium verum quae pellupta",
    "in etur, ut porpos id quaerum am, sequo que resequis voluptatis est omnitat ibusapid es dolorem re",
    "nonecae saperat landit quunt aribus sit, auda dolorum quibus acienimus eumquam, tem fugia",
    "sum, ipsaerum ius, officimil intem quia volla velendaecus ut faceaquaspel eaque pedipiti",
    "comnimus quatestiis netusdandit omnihil ipidit, occulle ctatium dolore illupta tendicium aut pos",
    "erovid ma quam ex et, untotas imendam accatus.",
    "Pa volorep erisqua speleni aecuptaque aperum idit, que eressi iscitiis volorios ipsam volor sit, aut in",
    "none volorepudio. Nis erit, quiaectatur apientiorro ex et quatus volo volore ipsum et esed minveles-",
    "ti ium re volo occum aut qui temquid quis mos de sit omnia denimus.",
    "Itatiaepudam quam volo voluptist vitatis id estemqui sam faccatiunt, voloresci consed et aut volo-",
    "rae volor maioribus ma qui con repernam, autet et modisi dolo tem sunte nem fuga. Rorro mintiat",
    "emporen tionseq uaspel inciend erovit expla eossintio to maionse ritestiumquo endit et plique",
    "voluptatas maio blautem. Et et a di omnis reriosam aliquam volorepudam utaesed igenectem. Ut",
    "aboreperibus magnis magnihit eniment la same perchit verum, oditassequam quo dolorer itatque",
    "voluptatur aut omnis simint, quas quaerum es evelit laut veliquia voles prendia aut et magnis",
    "pliquat incipsum ra suntibea nest ex estrum velenim inctiis remqui imus quam, suntias pitatibus",
    "corest, occus ex ex et aut utest, conempor ad que si consequi blab ipsaper fernatiandi nonsecto et",
    "quundio sapernam sunt andae pello etur a volo blam vollaut lit quid ma ea doluptatur sum ipsaepr",
    "atusapid et aut acerum quam alibusa dolupta tentur aditendis pe aut as moluptat re nonse ni quo",
    "omnist as est, volo volor antemporest laudios renim sint doluptatiis is ventiunt il experum faces",
    "vendam fugiaestrum volest recatiasin corro doluptatium sectet ommosa nusantiis con nonem",
    "latem nonsequis sedipsa intiae. Et omniendisque odit que qui atiam quiducitius, conet lanihiliquia",
    "con plitem facest occaborio. Catiusci optior molorum des con ea volum sim ea comnihit invercium",
    "ut alique sedit qui officaero cusaeprestia sequat hil ium eos rempore nonsectas qui nobis recerum",
    "dolupta tiusae nam et alitaquae sollum aut plictaq uibusdandic tenesecab imus moluptassit, omniet",
    "eate nisquam fuga. Mod mi, voloribearum volest is solorentur moloritentur andae prae. Quation-",
    "seque core coritatat expliquas eic totatem aboratquis denderum voluptibus, eturio id quis mos aut",
    "expelia doluptat.",
    "Xerectur, sinum sam nobis alisti atquo commolu ptatur ratur? Quis moluptas quo es ute volor"
];

// words the spell checker accepts
const known = new Set(["sit", "as", "hit", "nos", "to", "est", "pre", "sin", "audio", "con", "re", "a", "in", "id", "es", "mos", "sum", "pos", "ma", "ex", "on", "ti", "de", "di", "la", "same", "nest", "blab", "lit", "quid", "ad", "si", "is", "faces", "core", "mod", "mi", "none", "et", "ut", "rum", "site", "nem", "sam", "il", "pe"]);

const sideLines = 15;
document.getElementById("story").innerHTML = lines.map((line, i) => {
    const words = line.split(" ").map(word => {
        const bare = word.replace(/[.,?-]/g, "").toLowerCase();
        return known.has(bare) ? word : `<span>${word}</span>`;
    });
    return `<p${i < sideLines ? ' class="side"' : ""}>${words.join(" ")}</p>`;
}).join("");

// rulers: inches left and right of the page edge, and down the page
const hruler = document.getElementById("hruler");
for (let i = -7; i <= 15; i++) {
    hruler.innerHTML += `<span>${Math.abs(i)}</span>`;
}
const vruler = document.getElementById("vruler");
for (let i = 0; i <= 11; i++) {
    vruler.innerHTML += `<span>${i}</span>`;
}

const toolGroups = [
    ["sel", "dir"],
    ["page", "gap", "col"],
    ["type", "line", "pen", "pencil", "frame", "oval"],
    ["cut", "free", "grad", "feath"],
    ["note", "eye"],
    ["hand", "zoom"]
];
document.getElementById("toolbox").innerHTML = toolGroups.map(group =>
    `<div class="toolgroup">${group.map(name =>
        `<button class="tool${name === "type" ? " on" : ""}" aria-label="${name}"><svg><use href="#t-${name}"/></svg></button>`
    ).join("")}</div>`
).join("");

const dockGroups = [
    ["layers", "link", "pages"],
    ["stroke", "swatch", "cc"],
    ["fx", "obj"],
    ["para"],
    ["char"],
    ["pil"],
    ["a"],
    ["tf"],
    ["align"],
    ["path"]
];
document.getElementById("dock").innerHTML = dockGroups.map(group =>
    `<div class="dockgroup">${group.map(name => name === "fx"
        ? `<button class="fx">fx</button>`
        : `<button class="${name === "swatch" ? "on" : ""}" aria-label="${name}"><svg><use href="#d-${name}"/></svg></button>`
    ).join("")}</div>`
).join("");
```
